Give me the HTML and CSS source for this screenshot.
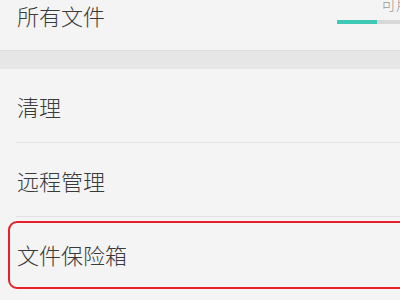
FILE: index.html
```html
<!DOCTYPE html>
<html lang="zh">
<head>
<meta charset="utf-8">
<link rel="stylesheet" href="styles.css">
</head>
<body>
<div class="page">
  <div class="header">
    <div class="title">所有文件</div>
    <div class="storage">
      <div class="avail">可用空间</div>
      <div class="bar"><div class="fill" style="width:40px"></div></div>
    </div>
  </div>
  <div class="band"></div>
  <div class="row">清理</div>
  <div class="row">远程管理</div>
  <div class="row last marked">文件保险箱</div>
</div>
</body>
</html>
```
FILE: styles.css
```css
html, body {
  margin: 0;
  padding: 0;
  background: #f4f4f4;
  overflow: hidden;
}
.page {
  width: 400px;
  height: 300px;
  overflow: hidden;
  font-family: "Noto Sans CJK SC", "Noto Sans", sans-serif;
  font-weight: 300;
  color: #3a3a3a;
  background: #f4f4f4;
}
.header {
  height: 50px;
  display: flex;
  align-items: flex-start;
  padding-left: 17px;
}
.title {
  font-size: 22px;
  line-height: 30px;
}
.storage {
  margin-left: auto;
  width: 63px;
  flex-shrink: 0;
  position: relative;
}
.avail {
  font-size: 15px;
  line-height: 16px;
  color: #9a9a9a;
  white-space: nowrap;
  margin-left: 44px;
  margin-top: -4px;
}
.bar {
  margin-top: 8px;
  height: 4px;
  background: #d8d8d8;
}
.fill {
  height: 4px;
  background: #3ec9b6;
}
.band {
  height: 18px;
  background: #e6e6e6;
  border-top: 1px solid #dcdcdc;
}
.row {
  margin-left: 16px;
  height: 73px;
  border-bottom: 1px solid #e2e2e2;
  display: flex;
  align-items: center;
  padding-left: 1px;
  font-size: 22px;
  position: relative;
}
.row.last {
  border-bottom: none;
}
.marked::after {
  content: "";
  position: absolute;
  left: -8px;
  top: 4px;
  width: 420px;
  height: 64px;
  border: 2px solid #e8202a;
  border-radius: 9px;
}
```
